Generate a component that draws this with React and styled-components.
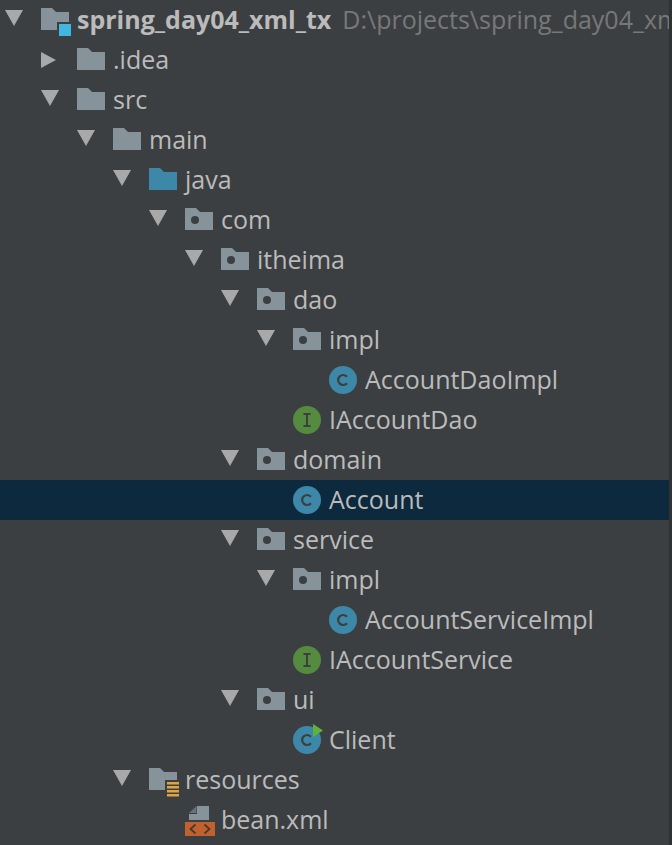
import { createGlobalStyle } from 'styled-components';
import styled from 'styled-components';

const rows = [
  { level: 0, arrow: 'down', icon: 'module', name: 'spring_day04_xml_tx', bold: true, hint: 'D:\\projects\\spring_day04_xml_tx' },
  { level: 1, arrow: 'right', icon: 'folder', name: '.idea' },
  { level: 1, arrow: 'down', icon: 'folder', name: 'src' },
  { level: 2, arrow: 'down', icon: 'folder', name: 'main' },
  { level: 3, arrow: 'down', icon: 'source', name: 'java' },
  { level: 4, arrow: 'down', icon: 'package', name: 'com' },
  { level: 5, arrow: 'down', icon: 'package', name: 'itheima' },
  { level: 6, arrow: 'down', icon: 'package', name: 'dao' },
  { level: 7, arrow: 'down', icon: 'package', name: 'impl' },
  { level: 8, icon: 'class', name: 'AccountDaoImpl' },
  { level: 7, icon: 'interface', name: 'IAccountDao' },
  { level: 6, arrow: 'down', icon: 'package', name: 'domain' },
  { level: 7, icon: 'class', name: 'Account', selected: true },
  { level: 6, arrow: 'down', icon: 'package', name: 'service' },
  { level: 7, arrow: 'down', icon: 'package', name: 'impl' },
  { level: 8, icon: 'class', name: 'AccountServiceImpl' },
  { level: 7, icon: 'interface', name: 'IAccountService' },
  { level: 6, arrow: 'down', icon: 'package', name: 'ui' },
  { level: 7, icon: 'runnable', name: 'Client' },
  { level: 3, arrow: 'down', icon: 'resources', name: 'resources' },
  { level: 4, icon: 'xml', name: 'bean.xml' },
];

const FOLDER = 'M0 8H11L15 12H28V30H0Z';

const Arrow = ({ dir }) => (
  <svg width="24" height="40" viewBox="0 0 24 40">
    {dir === 'down'
      ? <path d="M0 10H18L9 26Z" fill="#a9a9a9" />
      : <path d="M0 12L15 20L0 28Z" fill="#a9a9a9" />}
  </svg>
);

const Icon = ({ type }) => (
  <svg width="36" height="40" viewBox="0 0 36 40">
    {type === 'folder' && <path d={FOLDER} fill="#87939a" />}
    {type === 'source' && <path d={FOLDER} fill="#3d88a8" />}
    {type === 'package' && (
      <>
        <path d={FOLDER} fill="#87939a" />
        <circle cx="10" cy="20" r="4" fill="#3c3f41" />
      </>
    )}
    {type === 'module' && (
      <>
        <path d={FOLDER} fill="#87939a" />
        <rect x="16" y="22" width="15" height="15" fill="#3c3f41" />
        <rect x="18" y="24" width="12" height="12" fill="#40b6e0" />
      </>
    )}
    {type === 'resources' && (
      <>
        <path d={FOLDER} fill="#87939a" />
        <rect x="16" y="20" width="15" height="17" fill="#3c3f41" />
        <path d="M18 23.200H30M18 27.200H30M18 31.200H30M18 35.200H30" stroke="#e0a43e" strokeWidth="2.400" />
      </>
    )}
    {(type === 'class' || type === 'runnable') && (
      <>
        <circle cx="14" cy="20" r="14" fill="#3d88a8" />
        <path d="M18 16.800A5 5 0 1 0 18 23.200" fill="none" stroke="#3c3f41" strokeWidth="2.200" />
      </>
    )}
    {type === 'runnable' && <path d="M20 4L30 10.500L20 17Z" fill="#5fb33d" />}
    {type === 'interface' && (
      <>
        <circle cx="14" cy="20" r="14" fill="#548b3f" />
        <path d="M10.500 14H17.500M10.500 26H17.500M14 14V26" fill="none" stroke="#3c3f41" strokeWidth="2" />
      </>
    )}
    {type === 'xml' && (
      <>
        <path d="M12 6H24V20H4V14H12Z" fill="#87939a" />
        <path d="M4 13L11.500 6V13Z" fill="#687278" />
        <rect x="0" y="22" width="30" height="14" fill="#c26130" />
        <path d="M10.500 24.500L5.500 29L10.500 33.500M19.500 24.500L24.500 29L19.500 33.500" fill="none" stroke="#4a3a30" strokeWidth="1.800" />
      </>
    )}
  </svg>
);

const App = () => (
  <Window>
    <GlobalStyle />
    <Tree>
      {rows.map((row, i) => (
        <Row key={i} $level={row.level} $selected={row.selected}>
          <ArrowSlot>{row.arrow && <Arrow dir={row.arrow} />}</ArrowSlot>
          <IconSlot><Icon type={row.icon} /></IconSlot>
          <Name $bold={row.bold}>{row.name}</Name>
          {row.hint && <Hint>{row.hint}</Hint>}
        </Row>
      ))}
    </Tree>
    <EdgeStrip />
  </Window>
);

const GlobalStyle = createGlobalStyle`
  html, body {
    margin: 0;
    height: 100%;
    overflow: hidden;
    background: #3c3f41;
  }
`;

const Window = styled.div`
  display: flex;
  width: 672px;
  height: 845px;
  overflow: hidden;
  background: #3c3f41;
`;

const Tree = styled.div`
  flex: 1;
  min-width: 0;
  overflow: hidden;
  font-family: "Open Sans", "Liberation Sans", sans-serif;
  font-size: 25px;
  color: #bbbbbb;
`;

const EdgeStrip = styled.div`
  flex: 0 0 3px;
  background: #2f3133;
`;

const Row = styled.div`
  display: flex;
  align-items: center;
  height: 40px;
  padding-left: ${props => 5 + props.$level * 36}px;
  background: ${props => (props.$selected ? '#0d293e' : 'transparent')};
  white-space: nowrap;
`;

const ArrowSlot = styled.div`
  flex: 0 0 36px;
  height: 40px;
`;

const IconSlot = styled.div`
  flex: 0 0 36px;
  height: 40px;
`;

const Name = styled.span`
  font-weight: ${props => (props.$bold ? 700 : 400)};
  line-height: 38px;
  padding-bottom: 2px;
`;

const Hint = styled.span`
  margin-left: 11px;
  color: #787878;
  line-height: 38px;
  padding-bottom: 2px;
`;

export default App;
